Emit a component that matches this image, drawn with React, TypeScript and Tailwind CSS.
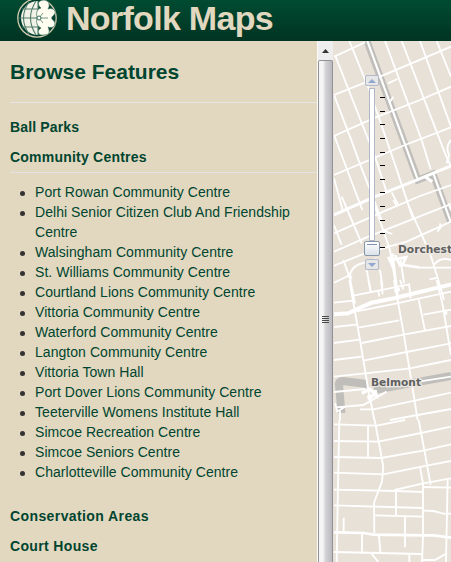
import React from "react";

const centres = [
  "Port Rowan Community Centre",
  "Delhi Senior Citizen Club And Friendship Centre",
  "Walsingham Community Centre",
  "St. Williams Community Centre",
  "Courtland Lions Community Centre",
  "Vittoria Community Centre",
  "Waterford Community Centre",
  "Langton Community Centre",
  "Vittoria Town Hall",
  "Port Dover Lions Community Centre",
  "Teeterville Womens Institute Hall",
  "Simcoe Recreation Centre",
  "Simcoe Seniors Centre",
  "Charlotteville Community Centre",
];

function Logo() {
  return (
    <svg className="h-[44px] w-[44px] shrink-0" viewBox="0 0 44 44" fill="none">
      <circle cx="22" cy="18" r="19.2" fill="#004030" stroke="#d2cbb0" strokeWidth="1.3" />
      <path d="M23 1A17 17 0 0 0 23 35Z" fill="#f1f2e8" />
      <g stroke="#527d69" strokeWidth="1.1">
        <path d="M4 18H23M7 9H23M7 27H23M14 2Q3 18 14 34M21 1Q10 18 21 35M23 1V35" />
      </g>
      <path d="M22 17C21 12 22 9 26 8C21 4 24 0 29 0C35 1 35 6 33 9C39 7 42 12 39 15C36 17 36 19 39 21C42 25 38 29 33 27C35 31 35 35 29 35C23 36 21 31 26 28C22 26 21 23 22 18Z" fill="#fffef1" stroke="#376b57" strokeWidth=".7" />
      <path d="m24 18 4-5m-4 5 9 0m-9 0 4 5" stroke="#527d69" strokeWidth=".8" />
      <circle cx="24" cy="18" r="2" fill="#fff" stroke="#376b57" />
    </svg>
  );
}

function Streets() {
  return (
    <svg className="block h-[521px] w-[117px]" viewBox="334 41 117 521" fill="none">
      <rect x="334" y="41" width="117" height="521" fill="#e8e1d8" />
      <g stroke="#bfbeba">
        <path d="M367 41L418 180L433 174L451 223" strokeWidth="7" />
        <path d="M341.5 413L339 385Q338 381 343 381L367 384M374 390L451 376" strokeWidth="8" />
      </g>
      <g transform="translate(330 40) scale(.33333)" stroke="#fff" strokeWidth="5.5">
        <path d="M12 50L105 7M12 165L150 110L280 55L363 20M12 288L130 235L270 180L363 140M12 405L225 315L363 262" />
        <path d="M15 45L62 165L135 350L170 457M58 3L118 150L200 388L250 540M12 165L60 290L95 385L155 540M12 285L97 510M12 415L38 510M165 3L275 300L302 388M215 3L345 340L363 380M270 3L363 260M320 3L363 110M185 457L205 495" />
        <path d="M112 3L262 415M310 400L363 548" strokeWidth="6.5" />
        <path d="M174 130L202 117M178 188L190 170M363 300Q345 320 357 345L350 370" />
        <path d="M12 525L135 470L265 418L363 378" strokeWidth="9" />
        <path d="M285 410L307 425" strokeWidth="9" />
      </g>
      <g transform="translate(330 200) scale(.33333)" stroke="#fff" strokeWidth="5.5">
        <path d="M12 100L160 35L270 -12L363 -45M12 155L115 110L363 12M12 197L105 160L230 125L363 65M12 248L60 225" />
        <path d="M12 75L35 135M35 -10L95 130M135 20L180 150L205 300M235 15L300 160L325 240L342 300M190 0L202 20M40 180L60 235L75 310M58 235Q60 200 95 190L140 177M110 210L122 272M150 210L158 262M188 160L204 290M212 180L222 250M160 90L175 98L187 102M322 95L332 82L330 70M265 203H363M312 195Q330 170 363 180M298 238L320 234M355 10L363 30" />
        <path d="M52 226L66 234M175 170L190 205M182 180L228 172L218 195L268 202M195 165L212 200" strokeWidth="8" />
      </g>
      <g transform="translate(310 280) scale(.33333)" stroke="#fff" strokeWidth="5.5">
        <path d="M118 0L150 180L175 330L193 420M252 0L281 160L323 420M326 59L345 152M380 0L398 75L423 225M175 0L182 35M213 0L218 43M270 0L280 28M297 10L302 55M205 30L208 50" />
        <path d="M72 68L130 62M130 47L295 14M140 94L260 70L423 35M340 104L423 89M72 141L140 134M145 143L268 121M72 189L148 179M155 189L281 164L423 138M72 240L155 230M160 242L290 216L423 190M72 290L165 280L300 265L423 240M72 336L165 327M150 388L190 388L300 365L423 338M78 382L160 375L230 335M230 320L423 290M240 420L423 387M90 392V420M75 370L82 395L105 380" />
        <path d="M72 103L115 100Q145 85 185 68L255 54L423 13" strokeWidth="12" />
        <path d="M155 340L180 328L198 344L195 330M172 352L195 345M253 32L270 28M175 360L185 350M402 99H412" strokeWidth="10" />
      </g>
      <g transform="translate(310 420) scale(.33333)" stroke="#fff" strokeWidth="5.5">
        <path d="M88 0L83 250L80 426M194 0L207 70L220 140L216 185L192 248L193 340M326 0L343 90L362 195M174 18V112M330 142L339 190V350L336 426M413 178L408 426M258 210V285M285 290V382M101 293V335M156 342V395M207 348L211 397M298 402V426" />
        <path d="M72 13L200 17L285 0M72 63L205 65L333 39L423 20M72 111L213 114L343 91L423 73M72 158L220 163L350 137L423 123M72 209L258 213L340 216M254 210L340 190L423 175M72 256L340 264M340 201L423 203M193 286L340 290M340 272L370 273L400 281L423 281M72 396L336 402M336 420L375 420L410 400M184 400L205 426" />
        <path d="M72 337L160 339L190 344L340 346L370 346L423 353" strokeWidth="8" />
      </g>
      <g fontFamily="'DejaVu Sans', sans-serif" fontSize="11" fontWeight="700" fill="#606060" stroke="#ece7e1" strokeWidth="2.5" paintOrder="stroke">
        <text x="398" y="253" textLength="54" lengthAdjust="spacingAndGlyphs">Dorchest</text>
        <text x="371" y="386" textLength="50" lengthAdjust="spacingAndGlyphs">Belmont</text>
      </g>
    </svg>
  );
}

function ZoomButton({ down = false }: { down?: boolean }) {
  return (
    <div className="flex h-[11px] w-[14px] items-center justify-center rounded-[2px] border border-[#b2bac8] bg-[#e7e7e7]">
      <svg className="h-[4px] w-[8px]" viewBox="0 0 8 4">
        <path d={down ? "M0 0H8L4 4Z" : "M0 4H8L4 0Z"} fill="#92a8ce" />
      </svg>
    </div>
  );
}

const ticks = [97, 111, 124, 138, 152, 165, 179, 192, 206, 220, 233, 247];

function ZoomSlider() {
  return (
    <div className="absolute left-[31px] top-[34px] flex w-[16px] flex-col items-center">
      <ZoomButton />
      <div className="mt-[2px] h-[153px] w-[6px] border border-[#b0b8c6] bg-white" />
      <div className="h-[15px] w-[16px] rounded-[2px] border border-[#8997ad] bg-linear-to-b from-white to-[#dce2eb] px-[2px] pt-[2px]">
        <div className="h-px bg-[#8090a8]" />
      </div>
      <div className="mt-[3px]"><ZoomButton down /></div>
      <svg className="absolute left-[16px] top-[-34px] h-[220px] w-[5px]" viewBox="0 41 5 220">
        {ticks.map((y) => <rect key={y} y={y} width="5" height="1" fill="#000" />)}
      </svg>
    </div>
  );
}

function Scrollbar() {
  return (
    <div className="flex h-[521px] w-[16px] shrink-0 flex-col border-l border-[#fafafa] bg-[#eeeeee]">
      <div className="flex h-[19px] items-center justify-center">
        <svg className="h-[4px] w-[7px]" viewBox="0 0 7 4"><path d="M0 4H7L3.5 0Z" fill="#343434" /></svg>
      </div>
      <div className="flex flex-1 items-center justify-center rounded-t-[2px] border-x border-t border-[#929296] bg-linear-to-r from-[#f5f5f5] from-30% via-[#d4d4d6] via-50% to-[#b9b9bf] pt-[15px]">
        <div className="flex h-[7px] w-[7px] flex-col justify-between">
          <div className="h-px bg-[#4b4b4b]" />
          <div className="h-px bg-[#4b4b4b]" />
          <div className="h-px bg-[#4b4b4b]" />
          <div className="h-px bg-[#4b4b4b]" />
        </div>
      </div>
    </div>
  );
}

export default function App() {
  return (
    <div className="h-[562px] w-[451px] overflow-hidden bg-[#e2d8c0] font-['Liberation_Sans',Arial,sans-serif] text-[#00452f]">
      <header className="flex h-[41px] items-start bg-linear-to-b from-[#004b32] to-[#003422] pl-[15px]">
        <Logo />
        <h1 className="ml-[7px] whitespace-nowrap text-[34px] font-bold leading-[37px] tracking-[-0.7px] text-[#e2d8c0]">Norfolk Maps</h1>
      </header>
      <main className="flex h-[521px]">
        <aside className="w-[317px] shrink-0 pl-[10px]">
          <h2 className="h-[62px] border-b border-[#e6e4e4] pt-[16px] text-[21px] font-bold leading-[30px]">Browse Features</h2>
          <h3 className="mt-[14px] text-[14px] font-bold leading-[20px] tracking-[0.15px]">Ball Parks</h3>
          <h3 className="mt-[10px] h-[26px] border-b border-[#e4e2e5] text-[14px] font-bold leading-[20px] tracking-[0.22px]">Community Centres</h3>
          <ul className="mt-[9px] text-[14px] leading-[20px] tracking-[0.05px]">
            {centres.map((name) => (
              <li key={name} className="flex">
                <span className="ml-[9.5px] mt-[8.5px] h-[5px] w-[5px] shrink-0 rounded-full bg-[#333]" />
                <span className="ml-[10.5px] w-[265px]">{name}</span>
              </li>
            ))}
          </ul>
          <h3 className="mt-[24px] text-[14px] font-bold leading-[20px] tracking-[0.4px]">Conservation Areas</h3>
          <h3 className="mt-[10px] text-[14px] font-bold leading-[20px] tracking-[0.35px]">Court House</h3>
        </aside>
        <Scrollbar />
        <section className="relative w-[118px] shrink-0 overflow-hidden bg-[#e8e1d8] pl-px">
          <Streets />
          <ZoomSlider />
        </section>
      </main>
    </div>
  );
}
